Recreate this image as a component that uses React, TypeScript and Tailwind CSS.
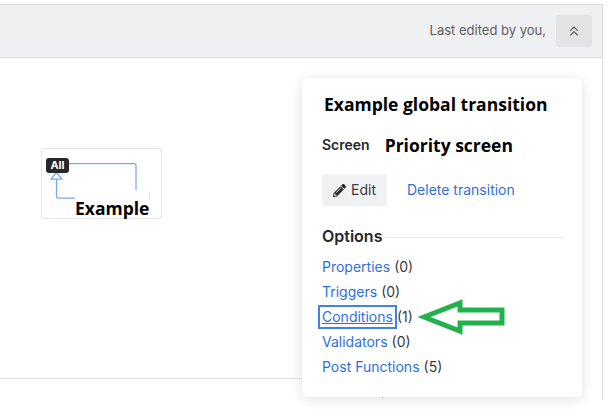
import { ChevronsUp } from "lucide-react";
import { FaPencilAlt } from "react-icons/fa";

const options = [
  { label: "Properties", count: 0 },
  { label: "Triggers", count: 0 },
  { label: "Conditions", count: 1, focused: true },
  { label: "Validators", count: 0 },
  { label: "Post Functions", count: 5 },
];

function TransitionNode() {
  return (
    <div className="absolute left-[41px] top-[148px] h-[71px] w-[121px] rounded-[3px] border border-[#e4e5e7] bg-white">
      <svg className="absolute left-0 top-0" width="119" height="69" viewBox="0 0 119 69" fill="none">
        <path d="M26 14.500H92a2 2 0 0 1 2 2V41" stroke="#76aaf3" strokeWidth="1.250" />
        <path d="M14.500 30V47a2 2 0 0 0 2 2H33" stroke="#76aaf3" strokeWidth="1.250" />
        <path d="M14.500 23.500L9 30H20Z" stroke="#76aaf3" strokeWidth="1.250" fill="white" />
        <path d="M107.500 42V51" stroke="#e6e6e6" strokeWidth="1" />
      </svg>
      <span className="absolute left-[4px] top-[9px] flex h-[15px] w-[23px] items-center justify-center rounded-[3px] bg-[#26272b] font-['Inter',sans-serif] text-[11px] font-bold text-white">
        All
      </span>
      <span className="absolute left-[33px] top-[48px] font-['Open_Sans',sans-serif] text-[17.500px] leading-[22px] font-bold text-black">
        Example
      </span>
    </div>
  );
}

function DetailsPanel() {
  return (
    <div className="absolute left-[302px] top-[78px] flex h-[319px] w-[280px] flex-col rounded-[5px] bg-white px-5 shadow-[0_2px_14px_rgba(0,0,0,0.12)]">
      <h2 className="mt-[13px] ml-[2px] font-['Open_Sans',sans-serif] text-[17.500px] leading-[26px] font-bold whitespace-nowrap text-black">
        Example global transition
      </h2>
      <div className="mt-[15px] flex items-center gap-[15px]">
        <span className="text-[14px] leading-[26px] font-semibold text-[#26272b]">Screen</span>
        <span className="font-['Open_Sans',sans-serif] text-[17.500px] leading-[26px] font-bold text-black">
          Priority screen
        </span>
      </div>
      <div className="mt-[16px] flex items-center gap-5">
        <button className="flex h-8 w-[65px] items-center justify-center gap-[5px] rounded-[3px] bg-[#f0f1f3] text-sm text-[#3a3b40]">
          <FaPencilAlt size={13} color="#26272b" />
          Edit
        </button>
        <a className="text-sm text-[#2f6fe0]">Delete transition</a>
      </div>
      <div className="mt-[18px] flex items-center gap-[3px]">
        <span className="text-[16px] leading-6 font-semibold text-[#26272b]">Options</span>
        <div className="mt-[2px] h-px flex-1 bg-[#e4e5e7]" />
      </div>
      <ul className="mt-[6px] flex flex-col">
        {options.map((o) => (
          <li key={o.label} className="flex h-[25px] items-center text-sm text-[#3a3b40]">
            {o.focused ? (
              <a className="-ml-[4px] flex h-[24px] items-center border-2 border-[#3f83e6] px-[2px] text-[#2f6fe0] underline">
                {o.label}
              </a>
            ) : (
              <a className="mr-1 text-[#2f6fe0]">{o.label}</a>
            )}
            ({o.count})
          </li>
        ))}
      </ul>
    </div>
  );
}

export default function App() {
  return (
    <div className="relative h-[417px] w-[610px] overflow-hidden bg-white font-['Inter',sans-serif]">
      <div className="mt-1 flex h-[395px] w-[603px] flex-col border-t border-r border-[#d8d9dc]">
        <header className="flex h-[53px] items-center justify-end gap-[10px] border-b border-[#d8d9dc] bg-[#eff0f2] pr-[10px]">
          <span className="text-[13px] text-[#5c5d63]">Last edited by you,</span>
          <button className="flex h-8 w-9 items-center justify-center rounded-[3px] bg-[#e2e3e5] text-[#5c5d63]">
            <ChevronsUp size={16} strokeWidth={1.750} />
          </button>
        </header>
        <main className="flex flex-1 flex-col justify-end">
          <div className="h-[21px] w-[383px] border-t border-r border-[#e0e1e3]" />
        </main>
      </div>
      <TransitionNode />
      <DetailsPanel />
      <svg className="absolute left-[418px] top-[298px]" width="90" height="40" viewBox="0 0 90 40" fill="none">
        <path d="M6 19L42 5V12H84V25H42V33Z" stroke="#22b14c" strokeWidth="5" />
      </svg>
    </div>
  );
}
